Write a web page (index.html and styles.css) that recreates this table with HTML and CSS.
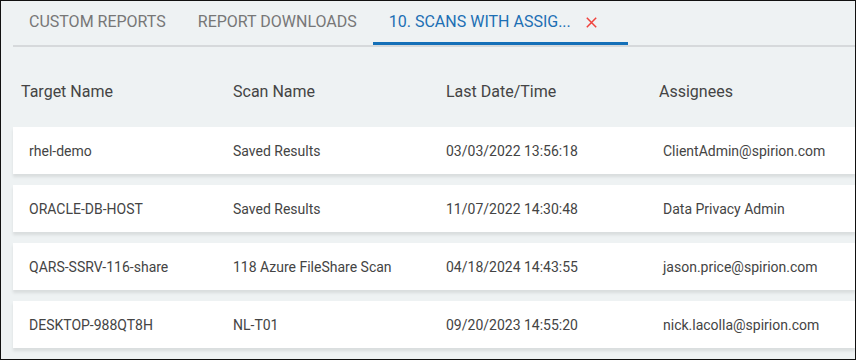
FILE: index.html
```html
<!DOCTYPE html>
<html>
<head>
    <meta charset="utf-8">
    <link rel="stylesheet" href="styles.css">
</head>
<body>
    <div class="frame">
        <div class="tabs">
            <div class="tab">Custom Reports</div>
            <div class="tab">Report Downloads</div>
            <div class="tab active">
                <span>10. Scans with Assig...</span>
                <svg class="close" width="11" height="11" viewBox="0 0 11 11">
                    <path d="M0.8 0.8 L10.2 10.2 M10.2 0.8 L0.8 10.2" stroke="#f0423c" stroke-width="1.5" fill="none"/>
                </svg>
            </div>
        </div>

        <div class="grid-head">
            <div>Target Name</div>
            <div>Scan Name</div>
            <div>Last Date/Time</div>
            <div>Assignees</div>
        </div>

        <div class="rows">
            <div class="row">
                <div>rhel-demo</div>
                <div>Saved Results</div>
                <div>03/03/2022 13:56:18</div>
                <div class="c4">ClientAdmin@spirion.com</div>
            </div>
            <div class="row">
                <div>ORACLE-DB-HOST</div>
                <div>Saved Results</div>
                <div>11/07/2022 14:30:48</div>
                <div class="c4">Data Privacy Admin</div>
            </div>
            <div class="row">
                <div>QARS-SSRV-116-share</div>
                <div>118 Azure FileShare Scan</div>
                <div>04/18/2024 14:43:55</div>
                <div class="c4">jason.price@spirion.com</div>
            </div>
            <div class="row">
                <div>DESKTOP-988QT8H</div>
                <div>NL-T01</div>
                <div>09/20/2023 14:55:20</div>
                <div class="c4">nick.lacolla@spirion.com</div>
            </div>
        </div>
    </div>
</body>
</html>
```

FILE: styles.css
```css
* {
    box-sizing: border-box;
}

body {
    margin: 0;
    font-family: Roboto, "Liberation Sans", Arial, sans-serif;
    background: #fff;
}

.frame {
    width: 856px;
    height: 360px;
    border: 1px solid #111;
    background-color: #eef2f3;
    padding-left: 12px;
    overflow: hidden;
}

/* tab strip */
.tabs {
    display: flex;
    height: 46px;
    border-bottom: 2px solid #d6d9db;
}

.tab {
    height: 44px;
    padding: 9px 16px 0 16px;
    font-size: 16px;
    text-transform: uppercase;
    color: #777;
    line-height: 24px;
}

.tab.active {
    color: #1c6fb4;
    border-bottom: 3px solid #1470b8;
    padding-right: 31px;
    display: flex;
    align-items: flex-start;
    gap: 15px;
}

.close {
    margin-top: 7px;
}

/* table */
.grid-head,
.row {
    display: grid;
    grid-template-columns: 212px 213px 213px 1fr;
}

.grid-head {
    height: 80px;
    padding-left: 8px;
    padding-top: 35px;
    font-size: 16px;
    color: #444;
}

.rows {
    display: flex;
    flex-direction: column;
    gap: 11px;
}

.row {
    height: 47px;
    background: #fff;
    align-items: center;
    padding-left: 16px;
    font-size: 14px;
    color: #444;
    box-shadow: 0 3px 3px rgba(0, 0, 0, 0.09);
    grid-template-columns: 204px 213px 213px 1fr;
}

.row .c4 {
    padding-left: 4px;
}
```
